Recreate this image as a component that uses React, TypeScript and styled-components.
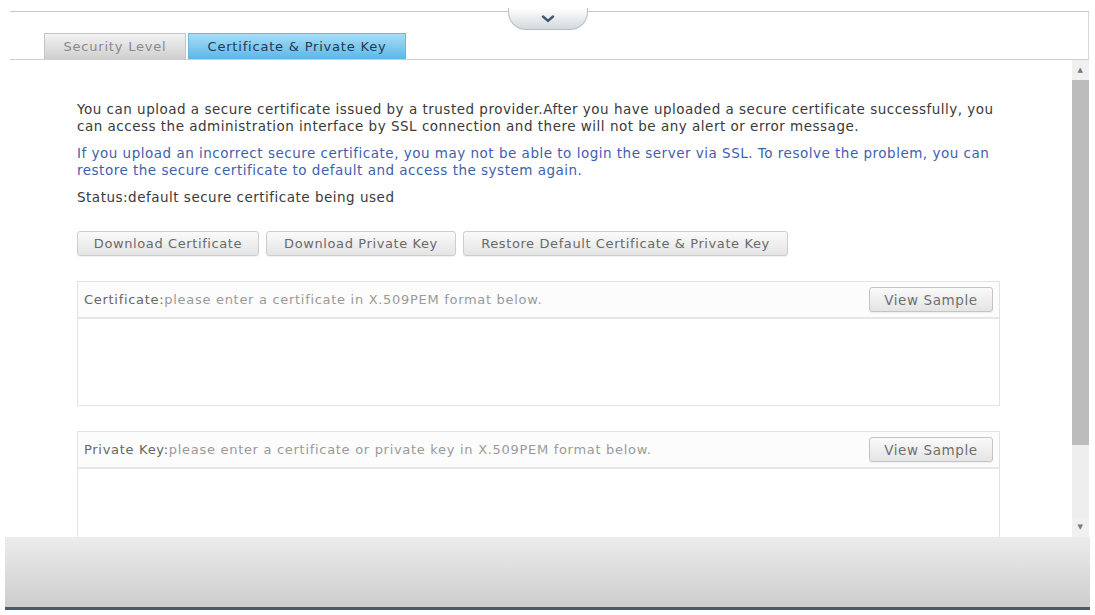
import React from 'react';
import styled, { createGlobalStyle } from 'styled-components';

const GlobalStyle = createGlobalStyle`
  html, body {
    margin: 0;
    padding: 0;
    background: #ffffff;
  }
  body {
    font-family: "DejaVu Sans", Verdana, sans-serif;
    letter-spacing: 0.5px;
  }
`;

const Page = styled.div`
  position: relative;
  width: 1095px;
  height: 615px;
  overflow: hidden;
  background: #ffffff;
  padding-top: 11px;
  box-sizing: border-box;
`;

const Window = styled.div`
  margin-left: 10px;
  width: 1079px;
  border-top: 1px solid #c9c9c9;
`;

const TabBar = styled.div`
  display: flex;
  align-items: flex-end;
  height: 48px;
  padding-left: 34px;
  gap: 2px;
  border-right: 1px solid #d6d6d6;
  border-bottom: 1px solid #cfcfcf;
  box-sizing: border-box;
`;

const Tab = styled.div<{ $active?: boolean }>`
  height: 26px;
  display: flex;
  align-items: center;
  justify-content: center;
  width: ${(p) => (p.$active ? '218px' : '142px')};
  font-size: 13px;
  letter-spacing: 0.8px;
  color: ${(p) => (p.$active ? '#1f3a58' : '#8a8a8a')};
  background: ${(p) =>
    p.$active
      ? 'linear-gradient(#a9dcf5, #5ab8e6)'
      : 'linear-gradient(#f2f2f2, #cfcfcf)'};
  border: 1px solid ${(p) => (p.$active ? '#6fb6da' : '#c4c4c4')};
  border-bottom: none;
  box-sizing: border-box;
`;

const Handle = styled.div`
  position: absolute;
  left: 508px;
  top: 8px;
  width: 80px;
  height: 22px;
  border: 1px solid #b7bfc4;
  border-top: none;
  border-radius: 0 0 18px 18px;
  background: linear-gradient(#ffffff, #d3d9dc);
  display: flex;
  align-items: center;
  justify-content: center;
  box-sizing: border-box;
`;

const Body = styled.div`
  display: flex;
  height: 477px;
`;

const Content = styled.div`
  flex: 1;
  padding: 41px 0 0 67px;
  overflow: hidden;
`;

const Para = styled.p<{ $blue?: boolean }>`
  margin: 0 0 10px;
  width: 928px;
  font-size: 13.5px;
  line-height: 17px;
  color: ${(p) => (p.$blue ? '#3e5fae' : '#3a3a3a')};
`;

const ButtonRow = styled.div`
  display: flex;
  gap: 7px;
  margin-top: 25px;
`;

const Button = styled.button<{ $w: number }>`
  width: ${(p) => p.$w}px;
  height: 25px;
  font-family: inherit;
  font-size: 13px;
  letter-spacing: 0.6px;
  color: #6a6a6a;
  background: linear-gradient(#fafafa, #e4e4e4);
  border: 1px solid #cdcdcd;
  border-radius: 3px;
  padding: 0;
  box-shadow: 0 1px 1px rgba(0, 0, 0, 0.06);
`;

const Panel = styled.div`
  width: 923px;
  margin-top: 25px;
  border: 1px solid #e3e3e3;
  box-sizing: border-box;
`;

const PanelHeader = styled.div`
  height: 37px;
  display: flex;
  align-items: center;
  justify-content: space-between;
  padding: 0 6px 0 6px;
  background: #fcfcfc;
  border-bottom: 2px solid #e6e6e6;
  box-sizing: border-box;
  font-size: 13px;
  letter-spacing: 0.7px;
  color: #9a9a9a;
`;

const Label = styled.span`
  color: #666666;
`;

const SampleButton = styled(Button)`
  color: #707070;
  border-color: #c4c4c4;
  font-size: 13.5px;
`;

const Area = styled.div<{ $h: number }>`
  height: ${(p) => p.$h}px;
  background: #ffffff;
`;

const Scrollbar = styled.div`
  width: 17px;
  display: flex;
  flex-direction: column;
  align-items: center;
  background: #f0f0f0;
`;

const Arrow = styled.div`
  height: 20px;
  width: 17px;
  display: flex;
  align-items: center;
  justify-content: center;
  color: #777777;
  font-size: 7px;
`;

const Thumb = styled.div`
  width: 17px;
  height: 365px;
  background: #bcbcbc;
`;

const Track = styled.div`
  flex: 1;
  width: 17px;
  background: #eeeeee;
`;

const Footer = styled.div`
  margin-left: 5px;
  width: 1085px;
  height: 73px;
  background: linear-gradient(#ececec, #cdcdcd);
  border-bottom: 3px solid #4b5c68;
  box-sizing: border-box;
`;

export default function App() {
  return (
    <Page>
      <GlobalStyle />
      <Window>
        <TabBar>
          <Tab>Security Level</Tab>
          <Tab $active>Certificate &amp; Private Key</Tab>
        </TabBar>
        <Body>
          <Content>
            <Para>
              You can upload a secure certificate issued by a trusted provider.After you have uploaded a secure
              certificate successfully, you can access the administration interface by SSL connection and there
              will not be any alert or error message.
            </Para>
            <Para $blue>
              If you upload an incorrect secure certificate, you may not be able to login the server via SSL. To
              resolve the problem, you can restore the secure certificate to default and access the system again.
            </Para>
            <Para>Status:default secure certificate being used</Para>
            <ButtonRow>
              <Button $w={182}>Download Certificate</Button>
              <Button $w={190}>Download Private Key</Button>
              <Button $w={325}>Restore Default Certificate &amp; Private Key</Button>
            </ButtonRow>
            <Panel>
              <PanelHeader>
                <span>
                  <Label>Certificate:</Label>please enter a certificate in X.509PEM format below.
                </span>
                <SampleButton $w={124}>View Sample</SampleButton>
              </PanelHeader>
              <Area $h={86} />
            </Panel>
            <Panel>
              <PanelHeader>
                <span>
                  <Label>Private Key:</Label>please enter a certificate or private key in X.509PEM format below.
                </span>
                <SampleButton $w={124}>View Sample</SampleButton>
              </PanelHeader>
              <Area $h={86} />
            </Panel>
          </Content>
          <Scrollbar>
            <Arrow>▲</Arrow>
            <Thumb />
            <Track />
            <Arrow>▼</Arrow>
          </Scrollbar>
        </Body>
      </Window>
      <Footer />
      <Handle>
        <svg width="14" height="8" viewBox="0 0 14 8">
          <path d="M2 1.5 L7 6 L12 1.5" fill="none" stroke="#3c5a78" strokeWidth="2.4" strokeLinecap="round" />
        </svg>
      </Handle>
    </Page>
  );
}
